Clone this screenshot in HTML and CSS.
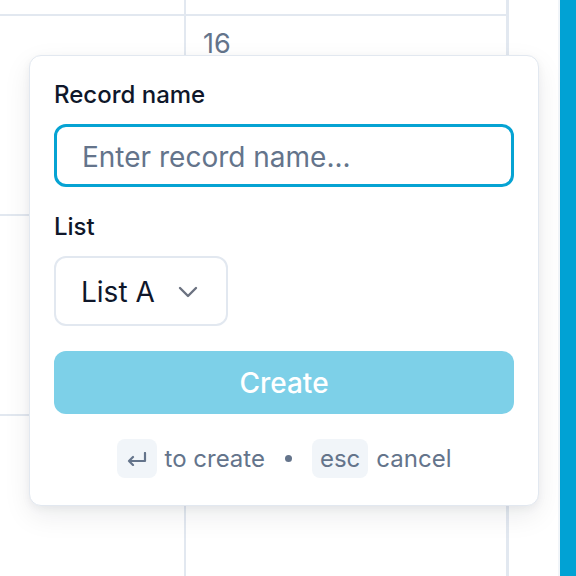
FILE: index.html
```html
<!DOCTYPE html>
<html lang="en">
<head>
    <meta charset="UTF-8">
    <meta name="viewport" content="width=device-width, initial-scale=1.0">
    <title>New record</title>
    <link rel="stylesheet" href="styles.css">
</head>
<body>
    <div class="board">
        <div class="calendar">
            <div class="cell"></div>
            <div class="cell"></div>
            <div class="cell"></div>
            <div class="cell"><span class="day">16</span></div>
            <div class="cell"></div>
            <div class="cell"></div>
            <div class="cell"></div>
            <div class="cell"></div>
        </div>
        <div class="gutter"></div>
        <div class="side-bar"></div>
    </div>

    <!-- quick create popover -->
    <div class="popover">
        <div class="field">
            <label class="field-label" for="recordName">Record name</label>
            <input id="recordName" class="text-input" type="text" placeholder="Enter record name...">
        </div>

        <div class="field">
            <span class="field-label">List</span>
            <button class="select-btn" type="button">
                <span>List A</span>
                <svg width="20" height="12" viewBox="0 0 20 12" fill="none">
                    <path d="M2 2 L10 10 L18 2" stroke="#6b7280" stroke-width="2.4" stroke-linecap="round" stroke-linejoin="round"/>
                </svg>
            </button>
        </div>

        <button class="create-btn" type="button">Create</button>

        <div class="hints">
            <span class="key">
                <svg width="20" height="14" viewBox="0 0 20 14" fill="none">
                    <path d="M18 1 V9 H2 M6 5 L2 9 L6 13" stroke="#64748b" stroke-width="2.2" stroke-linecap="round" stroke-linejoin="round"/>
                </svg>
            </span>
            <span>to create</span>
            <span class="dot"></span>
            <span class="key">esc</span>
            <span>cancel</span>
        </div>
    </div>
</body>
</html>
```

FILE: styles.css
```css
body {
    margin: 0;
    width: 576px;
    height: 576px;
    overflow: hidden;
    position: relative;
    font-family: 'Inter', 'Noto Sans', sans-serif;
    background: #fff;
    color: #0f172a;
}

.board {
    display: flex;
    height: 100%;
}

.calendar {
    display: grid;
    grid-template-columns: 186px 323px;
    grid-template-rows: 16px 200px 200px 180px;
}

.cell {
    box-sizing: border-box;
    border-bottom: 2px solid #e2e8f0;
    border-right: 2px solid #e2e8f0;
}

.cell:nth-child(even) {
    border-right-width: 3px;
}

.day {
    display: block;
    padding: 10px 0 0 17px;
    font-size: 27px;
    line-height: 36px;
    color: #64748b;
}

.gutter {
    width: 49px;
    border-right: 2px solid #f1f5f9;
}

.side-bar {
    flex: 1;
    background: #01a2d4;
}

.popover {
    position: absolute;
    left: 29px;
    top: 55px;
    width: 460px;
    padding: 24px 24px 27px;
    background: #fff;
    border: 1px solid #e2e8f0;
    border-radius: 12px;
    box-shadow: 0 10px 28px rgba(15, 23, 42, 0.08), 0 3px 8px rgba(15, 23, 42, 0.05);
    display: flex;
    flex-direction: column;
    gap: 25px;
}

.field {
    display: flex;
    flex-direction: column;
    align-items: flex-start;
    gap: 14px;
}

.field-label {
    font-size: 24px;
    line-height: 30px;
    font-weight: 450;
    color: #0f172a;
}

.text-input {
    box-sizing: border-box;
    width: 100%;
    height: 63px;
    padding: 3px 25px 0;
    border: 3px solid #06a3d3;
    border-radius: 12px;
    font-family: inherit;
    font-size: 28px;
    color: #0f172a;
    outline: none;
}

.text-input::placeholder {
    color: #64748b;
}

.select-btn {
    box-sizing: border-box;
    height: 70px;
    width: 174px;
    padding: 2px 25px 0;
    display: flex;
    align-items: center;
    gap: 23px;
    background: #fff;
    border: 2px solid #e2e8f0;
    border-radius: 12px;
    font-family: inherit;
    font-size: 28px;
    color: #0f172a;
}

.create-btn {
    height: 63px;
    padding-top: 2px;
    border: none;
    border-radius: 12px;
    background: #7dd0e8;
    color: #fff;
    font-family: inherit;
    font-size: 28px;
    font-weight: 450;
}

.hints {
    display: flex;
    align-items: center;
    justify-content: center;
    gap: 8px;
    font-size: 24px;
    color: #64748b;
}

.key {
    height: 39px;
    min-width: 40px;
    box-sizing: border-box;
    padding: 0 8px;
    display: flex;
    align-items: center;
    justify-content: center;
    background: #f1f5f9;
    border-radius: 8px;
}

.dot {
    width: 7px;
    height: 7px;
    margin: 0 12px;
    border-radius: 50%;
    background: #64748b;
}
```
